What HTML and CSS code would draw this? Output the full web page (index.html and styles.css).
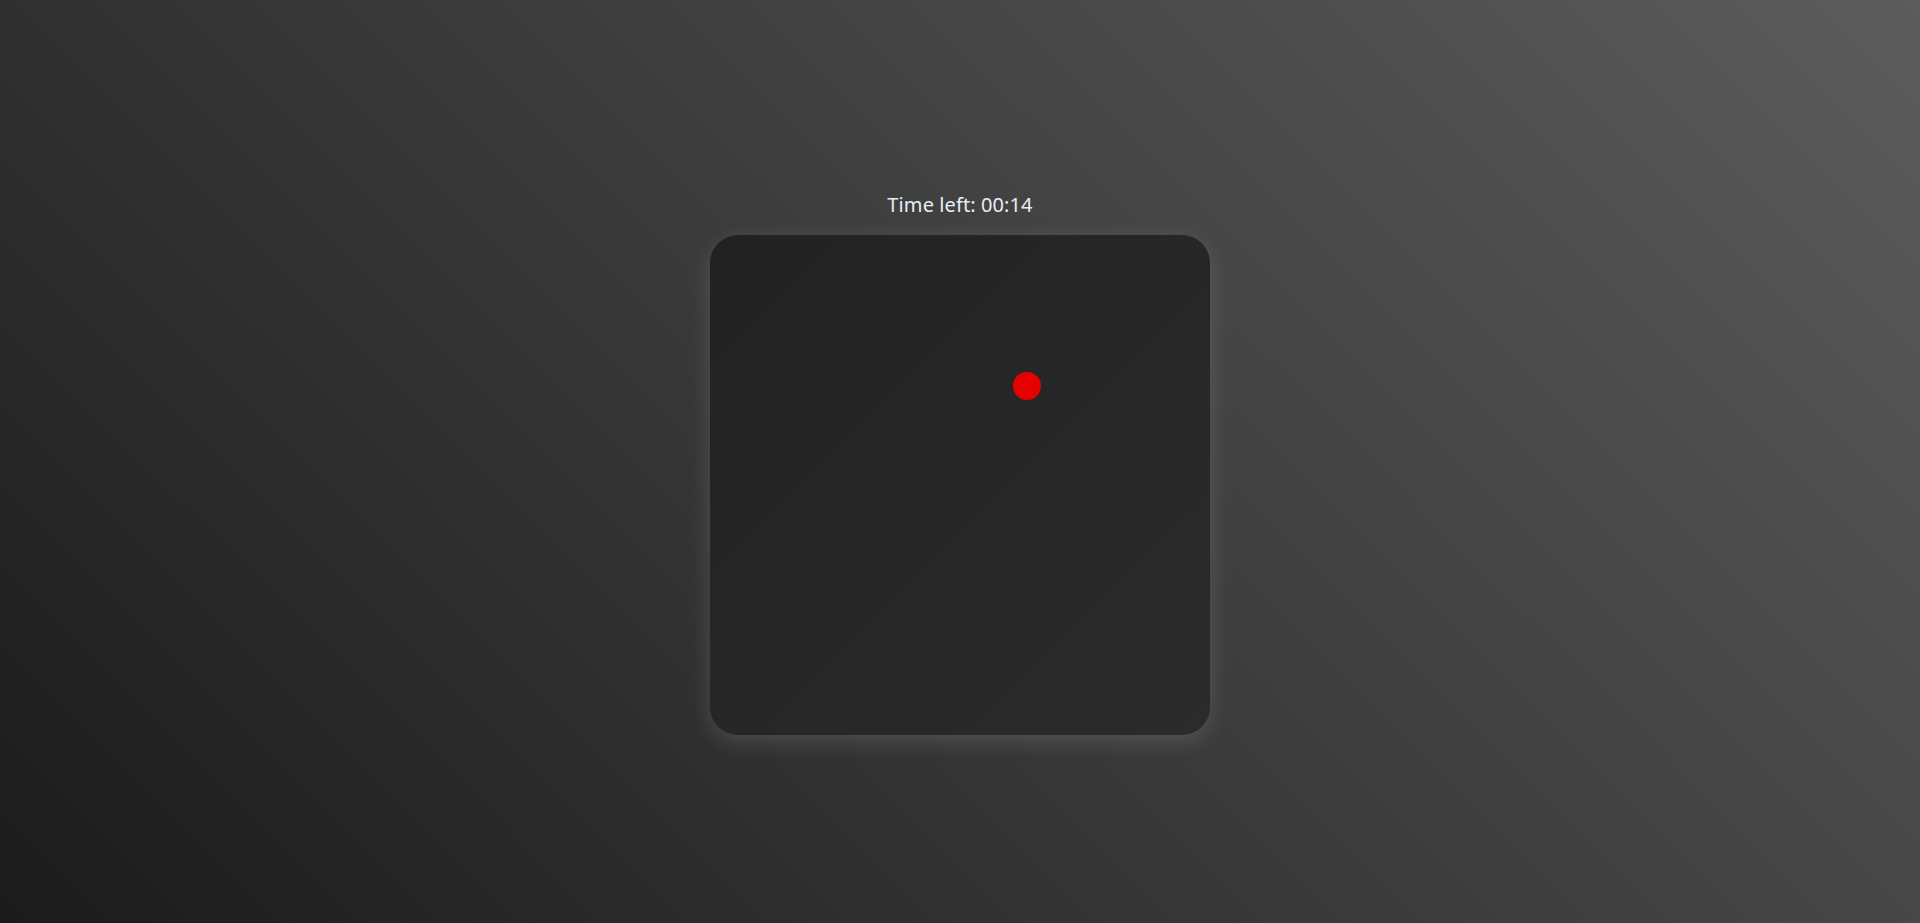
FILE: index.html
```html
<!DOCTYPE html>
<html lang="en">
<head>
<meta charset="utf-8">
<title>Timer</title>
<link rel="stylesheet" href="styles.css">
</head>
<body>
<main class="game">
  <div class="timer">Time left: 00:14</div>
  <div class="board">
    <div class="dot" style="left:303px;top:137px"></div>
  </div>
</main>
</body>
</html>
```
FILE: styles.css
```css
html, body {
  margin: 0;
  padding: 0;
  height: 100%;
}
body {
  background: linear-gradient(45deg, #1b1b1b 0%, #5c5c5c 100%);
  font-family: "Noto Sans", "DejaVu Sans", sans-serif;
  overflow: hidden;
}
.game {
  height: 100%;
  display: flex;
  flex-direction: column;
  align-items: center;
  justify-content: center;
}
.timer {
  color: #e6eef5;
  font-size: 20px;
  line-height: 25px;
  margin-top: 3px;
  margin-bottom: 18px;
  letter-spacing: 0.1px;
}
.board {
  position: relative;
  width: 500px;
  height: 500px;
  border-radius: 28px;
  background: linear-gradient(135deg, #222222, #2b2b2b);
  box-shadow: 0 6px 22px rgba(255, 255, 255, 0.14);
}
.dot {
  position: absolute;
  width: 28px;
  height: 28px;
  border-radius: 50%;
  background: #e60000;
}
```
